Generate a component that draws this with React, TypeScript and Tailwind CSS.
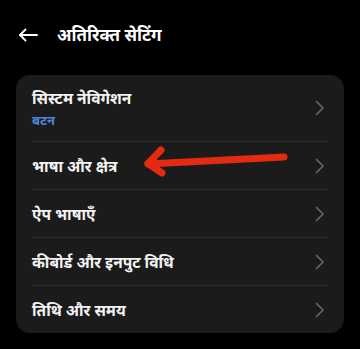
const rows = [
	{ title: 'सिस्टम नेविगेशन', sub: 'बटन' },
	{ title: 'भाषा और क्षेत्र' },
	{ title: 'ऐप भाषाएँ' },
	{ title: 'कीबोर्ड और इनपुट विधि' },
	{ title: 'तिथि और समय' },
];

const Chevron = () => (
	<svg width="10" height="16" viewBox="0 0 10 16" fill="none" stroke="#676767" strokeWidth="1.6" strokeLinecap="round" strokeLinejoin="round" className="mr-[3px]">
		<path d="M1.5 1.5L8 8l-6.5 6.5" />
	</svg>
);

const App: React.FC = () => {
	return (
		<div className="w-[360px] h-[349px] bg-black text-white overflow-hidden" style={{ fontFamily: '"Noto Sans", "Noto Sans Devanagari", sans-serif' }}>
			<div className="flex items-center h-[70px] pl-[18px] pb-[1px]">
				<svg width="20" height="14" viewBox="0 0 20 14" fill="none" stroke="white" strokeWidth="1.8" strokeLinecap="round" strokeLinejoin="round">
					<path d="M19 7H2" />
					<path d="M7.5 1.5L2 7l5.5 5.5" />
				</svg>
				<h1 className="ml-[19px] text-[17px] font-bold leading-none">अतिरिक्त सेटिंग</h1>
			</div>
			<div className="relative mx-4 mt-[5px] rounded-[14px] bg-[#1b1b1b]">
				<ul role="list">
					{rows.map((row, i) => (
						<li key={row.title} className={`flex items-center justify-between px-4 ${row.sub ? 'h-[66px]' : 'h-[48px]'}`}>
							<div className={`flex-1 flex flex-col justify-center h-full ${i > 0 ? 'border-t border-[#2c2c2c]' : ''}`}>
								<p className="text-[15.5px] font-bold leading-[22px] text-[#f2f2f2]">{row.title}</p>
								{row.sub && <p className="text-[13px] font-bold leading-[18px] mt-[2px] text-[#4f83d6]">{row.sub}</p>}
							</div>
							<div className={`h-full flex items-center ${i > 0 ? 'border-t border-[#2c2c2c]' : ''}`}>
								<Chevron />
							</div>
						</li>
					))}
				</ul>
				<svg className="absolute left-[-16px] top-[-75px] pointer-events-none" width="360" height="349" viewBox="0 0 360 349" fill="none">
					<path d="M284 157L148 164" stroke="#e42a10" strokeWidth="7" strokeLinecap="round" />
					<path d="M161 150L148 163.5L162 173" stroke="#e42a10" strokeWidth="7" strokeLinecap="round" strokeLinejoin="round" />
				</svg>
			</div>
		</div>
	);
};

export default App;
